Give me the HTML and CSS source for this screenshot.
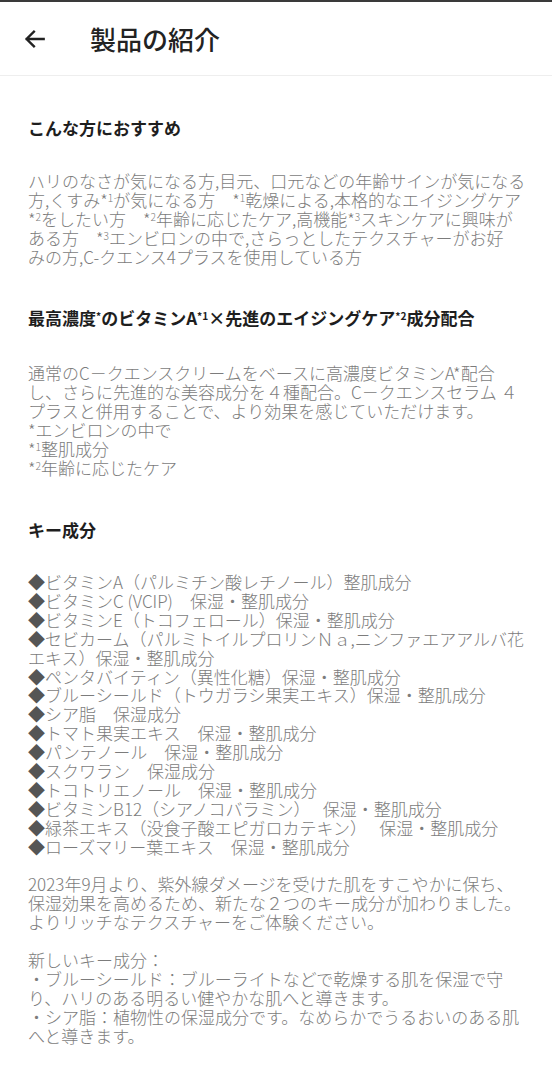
FILE: index.html
```html
<!DOCTYPE html>
<html lang="ja">
<head>
<meta charset="utf-8">
<title>製品の紹介</title>
<link rel="stylesheet" href="styles.css">
</head>
<body>
<header class="topbar">
  <button class="back" aria-label="戻る">
    <svg width="26" height="26" viewBox="0 0 24 24"><path d="M20 12H4.5M11 5.2L4.2 12l6.8 6.8" fill="none" stroke="#222" stroke-width="2.2" stroke-linecap="square"/></svg>
  </button>
  <h1 class="title">製品の紹介</h1>
</header>
<main class="content">
  <section class="block">
    <h2 class="heading">こんな方におすすめ</h2>
    <p class="body">ハリのなさが気になる方,目元、口元などの年齢サインが気になる<br>方,くすみ*<sup>1</sup>が気になる方　*<sup>1</sup>乾燥による,本格的なエイジングケア<br>*<sup>2</sup>をしたい方　*<sup>2</sup>年齢に応じたケア,高機能*<sup>3</sup>スキンケアに興味が<br>ある方　*<sup>3</sup>エンビロンの中で,さらっとしたテクスチャーがお好<br>みの方,C-クエンス4プラスを使用している方</p>
  </section>
  <section class="block second">
    <h2 class="heading">最高濃度<sup>*</sup>のビタミンA<sup>*1</sup>×先進のエイジングケア<sup>*2</sup>成分配合</h2>
    <p class="body">通常のC－クエンスクリームをベースに高濃度ビタミンA*配合<br>し、さらに先進的な美容成分を４種配合。C－クエンスセラム ４<br>プラスと併用することで、より効果を感じていただけます。<br>*エンビロンの中で<br>*<sup>1</sup>整肌成分<br>*<sup>2</sup>年齢に応じたケア</p>
  </section>
  <section class="block third">
    <h2 class="heading">キー成分</h2>
    <ul class="list">
      <li><span class="dia">◆</span>ビタミンA（パルミチン酸レチノール）整肌成分</li>
      <li><span class="dia">◆</span>ビタミンC (VCIP)　保湿・整肌成分</li>
      <li><span class="dia">◆</span>ビタミンE（トコフェロール）保湿・整肌成分</li>
      <li><span class="dia">◆</span>セビカーム（パルミトイルプロリンＮａ,ニンファエアアルバ花<br>エキス）保湿・整肌成分</li>
      <li><span class="dia">◆</span>ペンタバイティン（異性化糖）保湿・整肌成分</li>
      <li><span class="dia">◆</span>ブルーシールド（トウガラシ果実エキス）保湿・整肌成分</li>
      <li><span class="dia">◆</span>シア脂　保湿成分</li>
      <li><span class="dia">◆</span>トマト果実エキス　保湿・整肌成分</li>
      <li><span class="dia">◆</span>パンテノール　保湿・整肌成分</li>
      <li><span class="dia">◆</span>スクワラン　保湿成分</li>
      <li><span class="dia">◆</span>トコトリエノール　保湿・整肌成分</li>
      <li><span class="dia">◆</span>ビタミンB12（シアノコバラミン）　 保湿・整肌成分</li>
      <li><span class="dia">◆</span>緑茶エキス（没食子酸エピガロカテキン）　 保湿・整肌成分</li>
      <li><span class="dia">◆</span>ローズマリー葉エキス　保湿・整肌成分</li>
    </ul>
    <p class="body tight gap">2023年9月より、紫外線ダメージを受けた肌をすこやかに保ち、<br>保湿効果を高めるため、新たな２つのキー成分が加わりました。<br>よりリッチなテクスチャーをご体験ください。</p>
    <p class="body tight gap">新しいキー成分：<br>・ブルーシールド：ブルーライトなどで乾燥する肌を保湿で守<br>り、ハリのある明るい健やかな肌へと導きます。<br>・シア脂：植物性の保湿成分です。なめらかでうるおいのある肌<br>へと導きます。</p>
  </section>
</main>
</body>
</html>
```

FILE: styles.css
```css
* { box-sizing: border-box; }
html, body { margin: 0; padding: 0; background: #fff; }
body {
  font-family: "Noto Sans CJK JP", "Noto Sans", sans-serif;
  color: #222;
  border-top: 2px solid #3a3a3a;
}
.topbar {
  height: 74px;
  display: flex;
  align-items: center;
  padding: 0 0 0 20px;
  border-bottom: 1px solid #eeeeee;
}
.back {
  width: 30px;
  height: 30px;
  padding: 0;
  margin: 0;
  border: 0;
  background: none;
  display: flex;
  align-items: center;
  justify-content: center;
}
.title {
  margin: 0 0 0 40px;
  font-size: 26px;
  font-weight: 500;
  line-height: 30px;
  color: #222;
}
.content {
  padding: 0 28px 40px 28px;
}
.block { margin-top: 40px; }
.block.third { margin-top: 41px; }
.heading {
  margin: 0 0 31px 0;
  font-size: 17px;
  font-weight: 700;
  line-height: 24px;
  color: #1e1e1e;
  white-space: nowrap;
}
.second .heading { margin-bottom: 33px; }
.body {
  margin: 0;
  font-size: 17px;
  font-weight: 300;
  line-height: 19px;
  color: #7c7c7c;
  white-space: nowrap;
}
.body.tight { line-height: 18.9px; }
.body.gap { margin-top: 18.9px; }
sup {
  font-size: 0.6em;
  line-height: 0;
  vertical-align: 0.5em;
}
.list {
  list-style: none;
  margin: 0;
  padding: 0;
  font-size: 17px;
  font-weight: 300;
  line-height: 18.9px;
  color: #7c7c7c;
  white-space: nowrap;
}
.dia { color: #555; }
```
